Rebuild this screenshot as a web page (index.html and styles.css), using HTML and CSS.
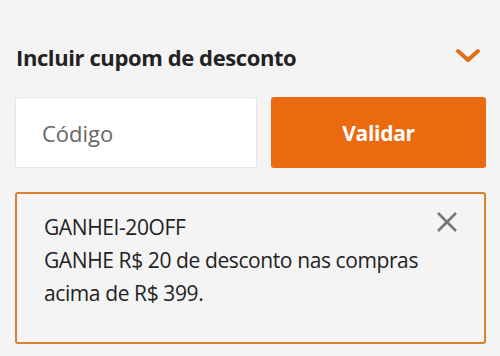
FILE: index.html
```html
<!DOCTYPE html>
<html lang="pt-BR">
<head>
<meta charset="utf-8">
<link rel="stylesheet" href="styles.css">
</head>
<body>
<section class="coupon">
  <div class="coupon-head">
    <h2 class="coupon-title">Incluir cupom de desconto</h2>
    <svg class="chevron" width="26" height="16" viewBox="0 0 26 16"><path d="M3 3 L13 12 L23 3" fill="none" stroke="#e26f18" stroke-width="4" stroke-linecap="round" stroke-linejoin="round"/></svg>
  </div>
  <div class="coupon-form">
    <input class="coupon-input" type="text" placeholder="Código">
    <button class="coupon-btn" type="button">Validar</button>
  </div>
  <div class="coupon-applied">
    <div class="coupon-text">
      <div class="coupon-code">GANHEI-20OFF</div>
      <div class="coupon-desc">GANHE R$ 20 de desconto nas compras acima de R$ 399.</div>
    </div>
    <svg class="close" width="22" height="22" viewBox="0 0 22 22"><path d="M2 2 L20 20 M20 2 L2 20" stroke="#777" stroke-width="2.6" stroke-linecap="butt"/></svg>
  </div>
</section>
</body>
</html>
```
FILE: styles.css
```css
html, body {
  margin: 0;
  padding: 0;
  background: #f4f4f4;
}
body {
  font-family: "Open Sans", "Noto Sans", sans-serif;
  color: #222;
}
.coupon {
  padding: 0 14px 0 15px;
}
.coupon-head {
  display: flex;
  align-items: center;
  justify-content: space-between;
  height: 90px;
  padding: 24px 0 0;
  box-sizing: border-box;
}
.coupon-title {
  margin: 0 0 0 1px;
  font-size: 22px;
  font-weight: 700;
  letter-spacing: -0.4px;
  color: #222;
}
.chevron {
  margin-right: 5px;
  margin-bottom: 2px;
}
.coupon-form {
  display: flex;
  gap: 14px;
  margin-top: 7px;
}
.coupon-input {
  width: 242px;
  flex: none;
  min-width: 0;
  height: 71px;
  box-sizing: border-box;
  border: 1px solid #e6e6e6;
  border-radius: 3px;
  background: #fff;
  padding: 0 0 0 26px;
  font-family: inherit;
  font-size: 22px;
  color: #222;
  outline: none;
}
.coupon-input::placeholder {
  color: #666;
}
.coupon-btn {
  flex: 1;
  min-width: 0;
  height: 71px;
  border: none;
  border-radius: 3px;
  background: #e96a0f;
  color: #fff;
  font-family: inherit;
  font-size: 21px;
  font-weight: 700;
  letter-spacing: -0.3px;
}
.coupon-applied {
  margin-top: 24px;
  height: 152px;
  box-sizing: border-box;
  border: 2px solid #d9822e;
  border-radius: 3px;
  padding: 17px 26px 0 27px;
  display: flex;
  justify-content: space-between;
  align-items: flex-start;
}
.coupon-text {
  font-size: 21px;
  line-height: 33px;
  letter-spacing: -0.4px;
  color: #222;
}
.coupon-desc {
  max-width: 380px;
}
.close {
  margin-top: 0;
  flex: none;
}
```
